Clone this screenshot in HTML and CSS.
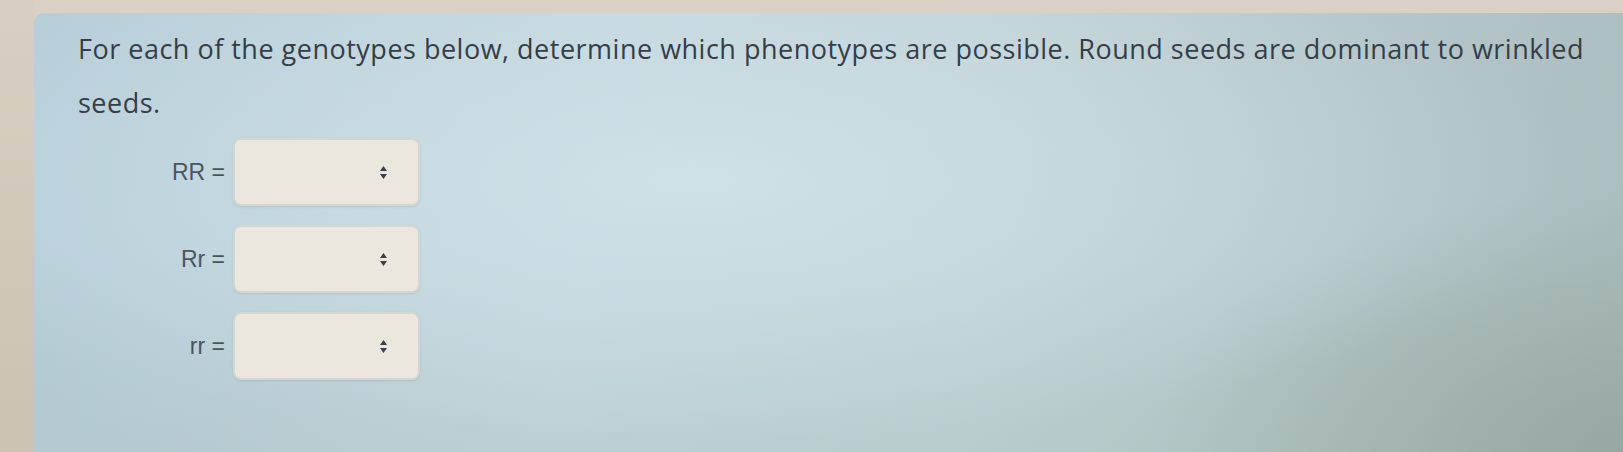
FILE: index.html
```html
<!DOCTYPE html>
<html lang="en">
  <head>
    <meta charset="UTF-8" />
    <title>Genotypes and phenotypes</title>
    <link rel="stylesheet" href="styles.css">
  </head>
  <body>
    <div class="page">
      <div class="rail"></div>
      <div class="panel">
        <p class="prompt">For each of the genotypes below, determine which phenotypes are possible. Round seeds are dominant to wrinkled seeds.</p>
        <div class="answers">
          <label class="answer-label" for="g-rr-big">RR =</label>
          <div class="picker" id="g-rr-big">
            <svg class="spin" width="9" height="15" viewBox="0 0 9 15"><path d="M4.5 1 L8 6 H1 Z M4.5 14 L8 9 H1 Z" fill="#3b4046"/></svg>
          </div>
          <label class="answer-label" for="g-rr-mix">Rr =</label>
          <div class="picker" id="g-rr-mix">
            <svg class="spin" width="9" height="15" viewBox="0 0 9 15"><path d="M4.5 1 L8 6 H1 Z M4.5 14 L8 9 H1 Z" fill="#3b4046"/></svg>
          </div>
          <label class="answer-label" for="g-rr-small">rr =</label>
          <div class="picker" id="g-rr-small">
            <svg class="spin" width="9" height="15" viewBox="0 0 9 15"><path d="M4.5 1 L8 6 H1 Z M4.5 14 L8 9 H1 Z" fill="#3b4046"/></svg>
          </div>
        </div>
      </div>
    </div>
  </body>
</html>
```

FILE: styles.css
```css
* {
  margin: 0;
  padding: 0;
  box-sizing: border-box;
}

html,
body {
  height: 100%;
}

body {
  font-family: "Open Sans", Lato, sans-serif;
  background-color: #d9d1c5;
  overflow: hidden;
}

.page {
  display: flex;
  height: 100%;
}

.rail {
  width: 34px;
  flex: none;
  background: linear-gradient(to bottom, #d8cfc2, #cbc2b3);
}

.panel {
  flex: 1;
  margin-top: 13px;
  padding: 9px 20px 0 44px;
  border-top-left-radius: 10px;
  background:
    radial-gradient(ellipse 55% 60% at 42% 38%, rgba(212, 228, 234, 0.7), rgba(212, 228, 234, 0) 100%),
    radial-gradient(ellipse 30% 60% at 100% 100%, rgba(140, 155, 148, 0.6), rgba(140, 155, 148, 0) 100%),
    linear-gradient(to bottom, rgba(0, 0, 0, 0) 55%, rgba(150, 165, 150, 0.15) 100%),
    linear-gradient(100deg, #b6cdd8 0%, #c3d7de 35%, #c0d2d6 60%, #b4c6c9 82%, #aabcbe 100%);
}

.prompt {
  max-width: 1540px;
  font-size: 27px;
  font-weight: 500;
  line-height: 54px;
  letter-spacing: 0.5px;
  color: #353e48;
}

.answers {
  display: grid;
  grid-template-columns: 147px 187px;
  grid-auto-rows: 68px;
  row-gap: 19px;
  align-items: center;
  column-gap: 8px;
  margin-top: 8px;
}

.answer-label {
  justify-self: end;
  font-family: "Liberation Sans", Arial, sans-serif;
  font-size: 23px;
  color: #4b555e;
}

.picker {
  display: flex;
  align-items: center;
  justify-content: flex-end;
  height: 68px;
  padding-right: 30px;
  border: 2px solid #d3d6d2;
  border-radius: 8px;
  background-color: #ebe7df;
  box-shadow: 0 1px 2px rgba(90, 100, 100, 0.15);
}
```
